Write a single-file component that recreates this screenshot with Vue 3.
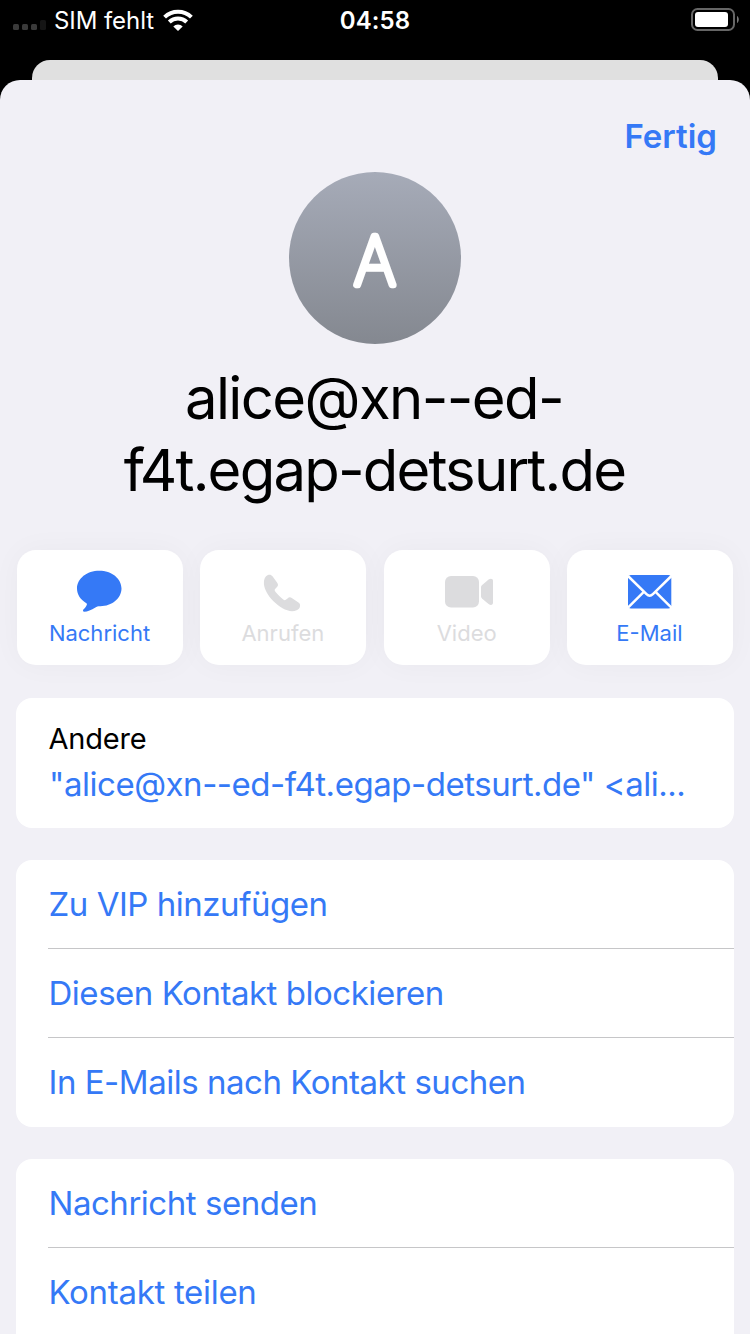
<script setup>
const vipGroup = [
  { text: 'Zu VIP hinzufügen', cls: 'r-vip' },
  { text: 'Diesen Kontakt blockieren', cls: 'r-block' },
  { text: 'In E-Mails nach Kontakt suchen', cls: 'r-search' },
]
const shareGroup = [
  { text: 'Nachricht senden', cls: 'r-send' },
  { text: 'Kontakt teilen', cls: 'r-share' },
]
</script>

<template>
  <div class="screen">
    <header class="status">
      <div class="carrier">
        <svg class="signal" width="34" height="12" viewBox="0 0 34 12">
          <rect x="0" y="4" width="6" height="6" rx="1.5" fill="#3a3a3a" />
          <rect x="9" y="4" width="6" height="6" rx="1.5" fill="#3a3a3a" />
          <rect x="18" y="4" width="6" height="6" rx="1.5" fill="#3a3a3a" />
          <rect x="27" y="0" width="6" height="10" rx="1.5" fill="#151515" />
        </svg>
        <span class="sim">SIM fehlt</span>
        <svg class="wifi" width="30" height="22" viewBox="0 0 30 22">
          <g fill="none" stroke="#fff" stroke-width="4">
            <path d="M1.6 8.1A19.3 19.3 0 0 1 28.4 8.1" />
            <path d="M6.3 13A12.4 12.4 0 0 1 23.7 13" />
          </g>
          <path d="M10.3 17.4A6.7 6.7 0 0 1 19.7 17.4L15 22Z" fill="#fff" />
        </svg>
      </div>
      <span class="time">04:58</span>
      <svg class="battery" width="50" height="24" viewBox="0 0 50 24">
        <rect x="1" y="1" width="42" height="21" rx="5.5" fill="none" stroke="#666" stroke-width="2" />
        <rect x="4" y="4" width="33" height="15" rx="3" fill="#fff" />
        <path d="M46 8C48.4 9.2 48.4 13.8 46 15Z" fill="#777" />
      </svg>
    </header>
    <div class="behind"></div>

    <main class="sheet">
      <div class="nav"><span class="done">Fertig</span></div>
      <svg class="avatar" width="172" height="172" viewBox="0 0 172 172">
        <defs>
          <linearGradient id="avatarFill" x1="0" y1="0" x2="0" y2="1">
            <stop offset="0" stop-color="#a6abb8" />
            <stop offset="1" stop-color="#848890" />
          </linearGradient>
        </defs>
        <circle cx="86" cy="86" r="86" fill="url(#avatarFill)" />
        <text class="initial" transform="translate(86 112.6) scale(0.97 1)" text-anchor="middle">A</text>
      </svg>
      <h1 class="name">
        <span class="name-a">alice@xn--ed-</span>
        <span class="name-b">f4t.egap-detsurt.de</span>
      </h1>

      <div class="actions">
        <div class="action">
          <svg width="50" height="44" viewBox="0 0 50 44">
            <path d="M25.3 1.7C37.6 1.7 47.5 9.4 47.5 19.6C47.5 29.6 37.6 37.4 26.2 37.3C23.6 37.3 22.8 37.6 21.4 38.5C17.4 41.1 13.2 42.8 10.4 42.8C8.8 42.8 8.6 41.3 9.6 40.3C11.2 38.5 12.4 37.2 12.9 35.4C13.1 34.7 12.7 34.3 12 33.9C6.4 30.7 3 25.5 3 19.6C3 9.4 13 1.7 25.3 1.7Z" fill="currentColor" />
          </svg>
          <span>Nachricht</span>
        </div>
        <div class="action off">
          <svg width="50" height="44" viewBox="0 0 50 44">
            <path d="M16.2 32C23.6 39.3 32.7 44.3 39.6 41.2C41.7 40.3 43 38.8 43.1 36.4C43.1 35.3 42.5 34.4 41.4 33.6L34.8 28.9C33.2 27.9 32 28 30.5 29.4L28.8 30.8C28.1 31.4 27.2 31.2 26.6 30.8C24.4 29.3 19.6 24.6 18.1 22.3C17.6 21.6 17.5 20.8 18.1 20.1L20 18.1C21.3 16.7 21.3 15.4 20.2 13.8L15.5 7.3C14.3 5.7 12.7 5.3 10.9 6.1C8 7.4 6.7 10.7 6.9 14.5C7.2 20.1 11.2 27 16.2 32Z" fill="currentColor" />
          </svg>
          <span>Anrufen</span>
        </div>
        <div class="action off">
          <svg class="centered" width="50" height="44" viewBox="0 0 50 44">
            <rect x="3" y="7" width="34" height="31.6" rx="6" fill="currentColor" />
            <path d="M39 18.5C39 17.3 39.4 16.6 40.2 15.9L46.6 10.6C48.8 8.9 51 9.6 51 12V33.5C51 36 48.8 36.7 46.6 35L40.2 29.7C39.4 29 39 28.3 39 27.1Z" fill="currentColor" />
          </svg>
          <span class="l-video">Video</span>
        </div>
        <div class="action">
          <svg class="centered" width="50" height="44" viewBox="0 0 50 44">
            <rect x="3" y="6" width="43.3" height="33.6" rx="3" fill="currentColor" />
            <path d="M3 7L21.5 25.2Q24.7 28.3 27.9 25.2L46.4 7M3 38.6L18.6 23.2M46.4 38.6L30.8 23.2" fill="none" stroke="#fff" stroke-width="2.5" />
          </svg>
          <span>E-Mail</span>
        </div>
      </div>

      <section class="panel other">
        <div class="label">Andere</div>
        <div class="address">"alice@xn--ed-f4t.egap-detsurt.de" &lt;ali...</div>
      </section>

      <section class="panel">
        <div v-for="r in vipGroup" :key="r.cls" class="row"><span :class="r.cls">{{ r.text }}</span></div>
      </section>

      <section class="panel last">
        <div v-for="r in shareGroup" :key="r.cls" class="row"><span :class="r.cls">{{ r.text }}</span></div>
      </section>
    </main>
  </div>
</template>

<style>
body { background: #000; overflow: hidden; }
</style>

<style scoped>
.screen {
  width: 750px; height: 1334px; overflow: hidden; background: #000;
  display: flex; flex-direction: column;
  font-family: Inter, "Liberation Sans", sans-serif; color: #000;
  white-space: nowrap;
}
.status {
  height: 60px; flex: none; display: grid; grid-template-columns: 1fr auto 1fr;
  color: #fff; align-items: start; box-sizing: border-box;
}
.carrier { display: flex; }
.signal { margin: 20px 7px 0 13px; }
.sim { font-size: 24px; line-height: 30px; margin-top: 6px; letter-spacing: -0.07px; width: 109px; }
.wifi { margin-top: 9px; }
.time { font-size: 24px; font-weight: 600; line-height: 30px; margin-top: 6px; letter-spacing: 0.1px; }
.battery { justify-self: end; margin: 8px 9px 0 0; }
.behind { height: 20px; flex: none; margin: 0 32px; background: #e0e0e0; border-radius: 18px 18px 0 0; }
.sheet {
  flex: 1; min-height: 0; overflow: hidden; background: #f1f0f6;
  border-radius: 20px 20px 0 0; display: flex; flex-direction: column; align-items: stretch;
}
.nav { height: 92px; flex: none; display: flex; justify-content: flex-end; padding: 36px 33px 0 0; box-sizing: border-box; }
.done { font-size: 33px; line-height: 40px; font-weight: 600; color: #3579f6; letter-spacing: 0; }
.avatar { align-self: center; flex: none; }
.initial { font-size: 66.5px; font-weight: 100; fill: #fff; stroke: #fff; stroke-width: 6.6px; stroke-linejoin: round; }
.name {
  margin: 18px 0 0; height: 188px; flex: none; font-weight: 400; font-size: 58px; line-height: 72px;
  display: flex; flex-direction: column; align-items: center;
}
.name-a { letter-spacing: -1.6px; margin-right: 2px; }
.name-b { letter-spacing: -1.8px; margin-right: 1px; }
.actions { display: grid; grid-template-columns: repeat(4, 166px); justify-content: space-between; padding: 0 17px; flex: none; }
.action {
  height: 115px; border-radius: 19px; background: #fff; color: #3579f6;
  box-shadow: 0 0 30px rgba(0, 0, 0, 0.035);
  display: flex; flex-direction: column; align-items: center; box-sizing: border-box; padding-top: 19px;
  font-size: 22px; line-height: 28px;
}
.action svg { flex: none; overflow: visible; margin-right: 2px; }
.action svg.centered { margin-right: 0; }
.action span { margin: 6px 1px 0 0; letter-spacing: 0; }
.action .l-video { margin-right: 0; }
.off { color: #dcdcde; }
.panel { margin: 32px 16px 0; background: #fff; border-radius: 16px; flex: none; }
.other { margin-top: 33px; height: 130px; box-sizing: border-box; padding: 22px 0 0 33px; }
.label { font-size: 29px; line-height: 38px; letter-spacing: -0.2px; margin-left: -0.5px; }
.address { font-size: 33px; line-height: 40px; margin-top: 6px; color: #3579f6; letter-spacing: -0.47px; }
.row {
  height: 89px; box-sizing: border-box; margin-left: 32px; border-bottom: 1px solid #c6c6c8;
  font-size: 33px; line-height: 88px; color: #3579f6; letter-spacing: -0.47px;
}
.row span { margin-left: 0.5px; }
.row .r-share { letter-spacing: -0.3px; }
.row:last-child { border-bottom: none; }
.last { height: 267px; }
</style>
